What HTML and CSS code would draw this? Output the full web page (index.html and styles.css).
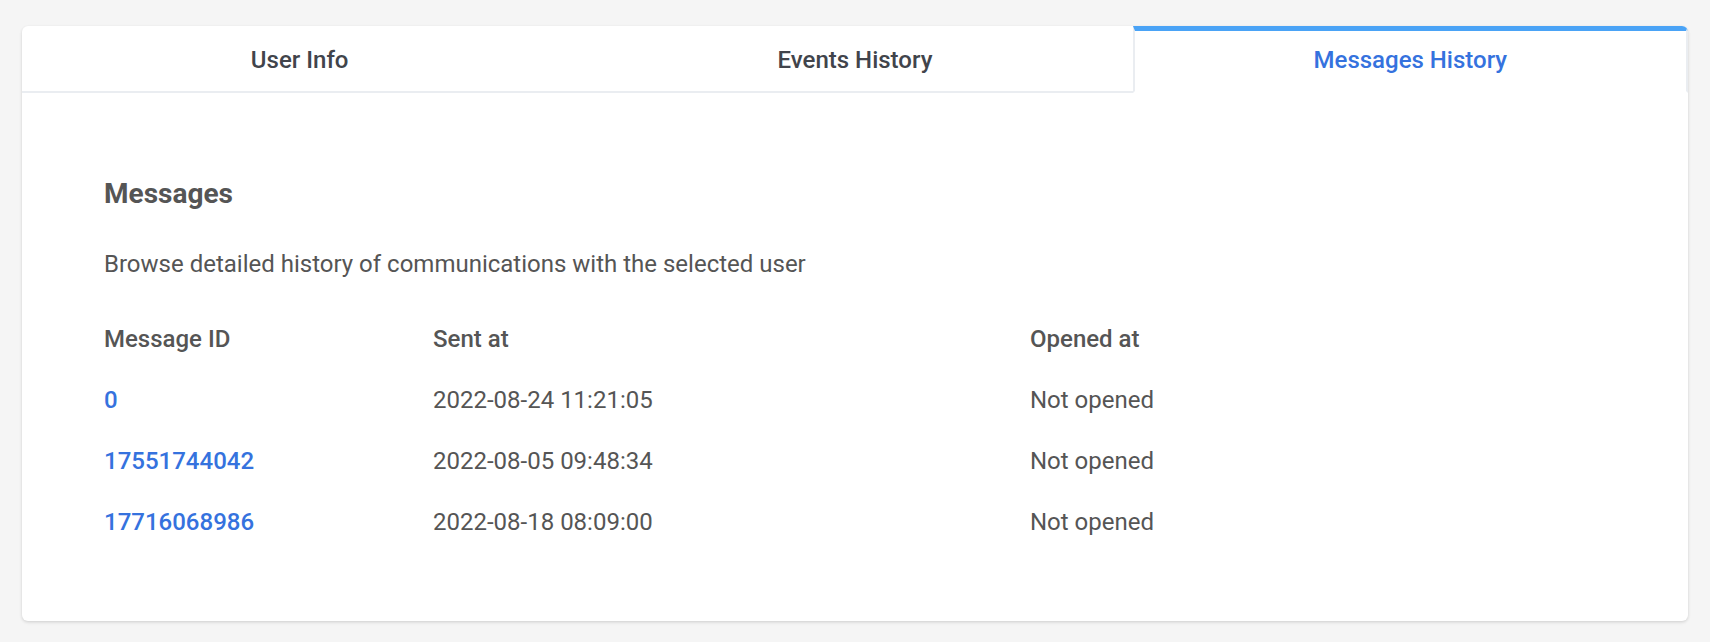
FILE: index.html
```html
<!DOCTYPE html>
<html>
<head>
  <title>Messages History</title>
  <link rel="stylesheet" href="styles.css">
</head>
<body>
  <div class="card">
    <div class="tabs">
      <div class="tab">User Info</div>
      <div class="tab">Events History</div>
      <div class="tab active">Messages History</div>
    </div>
    <div class="panel">
      <h2 class="panel-title">Messages</h2>
      <p class="panel-desc">Browse detailed history of communications with the selected user</p>
      <div class="messages">
        <div class="head">Message ID</div>
        <div class="head">Sent at</div>
        <div class="head">Opened at</div>

        <a class="msg-id" href="#">0</a>
        <div>2022-08-24 11:21:05</div>
        <div>Not opened</div>

        <a class="msg-id" href="#">17551744042</a>
        <div>2022-08-05 09:48:34</div>
        <div>Not opened</div>

        <a class="msg-id" href="#">17716068986</a>
        <div>2022-08-18 08:09:00</div>
        <div>Not opened</div>
      </div>
    </div>
  </div>
</body>
</html>
```

FILE: styles.css
```css
:root {
  --page-bg: #f5f5f5;
  --text: #555555;
  --tab-text: #41444b;
  --link: #3572de;
  --accent: #4aa3f6;
  --line: #eaedf1;
}

body {
  margin: 0;
  padding: 26px 22px;
  background: var(--page-bg);
  font-family: Roboto, 'Liberation Sans', Arial, sans-serif;
  color: var(--text);
}

.card {
  background: #fff;
  border-radius: 6px;
  box-shadow: 0 1px 3px rgba(0, 0, 0, 0.12), 0 2px 4px rgba(0, 0, 0, 0.04);
  overflow: hidden;
}

.tabs {
  display: grid;
  grid-template-columns: 1fr 1fr 1fr;
}

.tab {
  height: 57px;
  padding-bottom: 3px;
  display: flex;
  align-items: center;
  justify-content: center;
  font-size: 24px;
  font-weight: 500;
  color: var(--tab-text);
  border-top: 5px solid transparent;
  border-bottom: 2px solid var(--line);
  cursor: pointer;
}

.tab.active {
  color: var(--link);
  border-top-color: var(--accent);
  border-left: 2px solid var(--line);
  border-right: 2px solid var(--line);
  border-bottom-color: transparent;
}

.panel {
  padding: 85px 82px 85px;
}

.panel-title {
  margin: 0;
  font-size: 28px;
  line-height: 32px;
  font-weight: 700;
  color: var(--text);
}

.panel-desc {
  margin: 40px 0 0;
  font-size: 24px;
  line-height: 28px;
}

.messages {
  margin-top: 47px;
  display: grid;
  grid-template-columns: 329px 597px auto;
  row-gap: 33px;
  font-size: 24px;
  line-height: 28px;
}

.head {
  font-weight: 500;
}

.msg-id {
  color: var(--link);
  font-weight: 500;
  text-decoration: none;
}
```
